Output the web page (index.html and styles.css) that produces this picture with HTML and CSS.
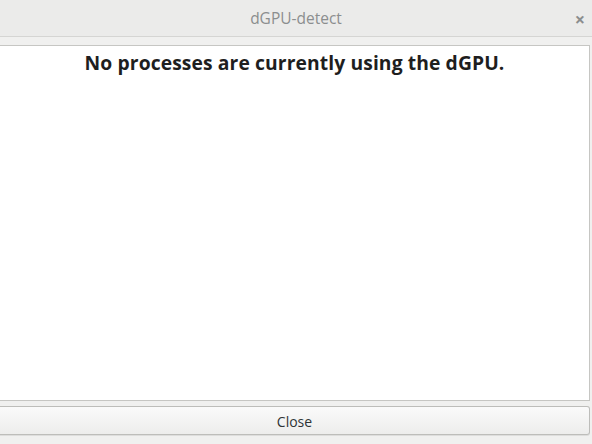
FILE: index.html
```html
<!DOCTYPE html>
<html lang="en">
<head>
    <meta charset="UTF-8">
    <title>dGPU-detect</title>
    <link rel="stylesheet" href="styles.css">
</head>
<body>
    <div class="window">
        <header class="titlebar">
            <span class="title">dGPU-detect</span>
            <span class="close-x">&times;</span>
        </header>

        <main class="content">
            <section class="frame">
                <h1>No processes are currently using the dGPU.</h1>
            </section>
            <button class="close-btn" type="button">Close</button>
        </main>
    </div>
</body>
</html>
```

FILE: styles.css
```css
body {
    margin: 0;
    padding: 0;
    font-family: 'Open Sans', 'Noto Sans', sans-serif;
    background-color: #f0f0ef;
    color: #2e3436;
}

.window {
    width: 592px;
    height: 444px;
    display: flex;
    flex-direction: column;
    overflow: hidden;
}

.titlebar {
    height: 36px;
    flex: none;
    background-color: #ebebea;
    border-bottom: 1px solid #d5d5d3;
    display: flex;
    align-items: center;
    justify-content: center;
    position: relative;
}

.title {
    font-size: 15.5px;
    color: #8b8e8f;
    margin-top: -1px;
}

.close-x {
    position: absolute;
    right: 7px;
    top: 7px;
    font-size: 18px;
    font-weight: bold;
    color: #8b8e8f;
}

.content {
    flex: 1;
    display: flex;
    flex-direction: column;
    padding: 8px 2px 9px 0;
    gap: 5px;
}

.frame {
    flex: 1;
    background-color: #fff;
    border: 1px solid #c6c6c3;
    border-left: none;
}

.frame h1 {
    margin: 0;
    padding-top: 3px;
    text-align: center;
    font-size: 19.3px;
    font-weight: bold;
    color: #1e1e1e;
    letter-spacing: 0.1px;
}

.close-btn {
    height: 29px;
    flex: none;
    padding-top: 2px;
    font-family: inherit;
    font-size: 14px;
    color: #2e3436;
    background: linear-gradient(#fafafa, #ededec);
    border: 1px solid #bdbdba;
    border-left: none;
    border-radius: 0 3px 3px 0;
    box-shadow: 0 1px 0 rgba(0, 0, 0, 0.08);
}
```
